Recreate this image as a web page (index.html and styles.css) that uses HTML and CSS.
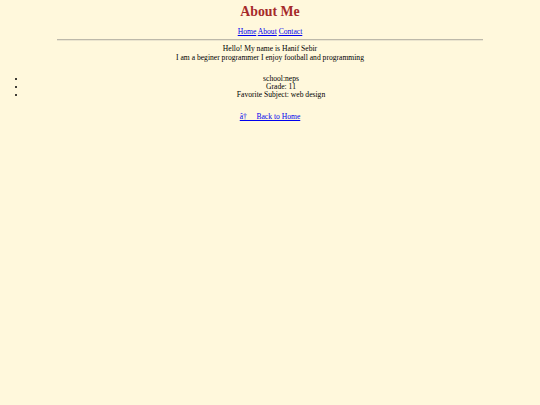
FILE: index.html
```html
<!DOCTYPE html>
<html lang="en">
<head>
<meta charset="utf-8">
<title>About Me</title>
<link rel="stylesheet" href="styles.css">
</head>
<body>
<header class="site-header">
  <h1 class="title">About Me</h1>
  <nav class="nav">
    <a href="#">Home</a> <a href="#">About</a> <a href="#">Contact</a>
  </nav>
  <hr class="rule">
</header>
<main class="content">
  <p class="intro">Hello! My name is Hanif Sebir<br>I am a beginer programmer I enjoy football and programming</p>
  <ul class="facts">
    <li>school:neps</li>
    <li>Grade: 11</li>
    <li>Favorite Subject: web design</li>
  </ul>
  <p class="back"><a href="#">â†&nbsp;&nbsp;&nbsp;&nbsp; Back to Home</a></p>
</main>
</body>
</html>
```
FILE: styles.css
```css
html {
  background: #fff8dc;
}
body {
  margin: 2px 4px;
  font-family: "Liberation Serif", "Times New Roman", serif;
  font-size: 7.6px;
  color: #000;
  text-align: center;
  background: #fff8dc;
}
a {
  color: #0000ee;
}
.title {
  margin: 0;
  padding-top: 1px;
  font-size: 13.8px;
  line-height: 17px;
  font-weight: bold;
  color: #a52a2a;
}
.nav {
  margin-top: 6.5px;
  line-height: 9px;
}
.rule {
  width: 80%;
  margin: 3px auto 3px;
  border: none;
  border-top: 1px solid #bdb9aa;
  border-bottom: 1px solid #ebe5cf;
  height: 0;
}
.intro {
  margin: 0;
  line-height: 9px;
}
.facts {
  margin: 13px 0 0;
  padding-left: 22px;
  line-height: 8px;
}
.back {
  margin: 13px 0 0;
  line-height: 9px;
}
```
